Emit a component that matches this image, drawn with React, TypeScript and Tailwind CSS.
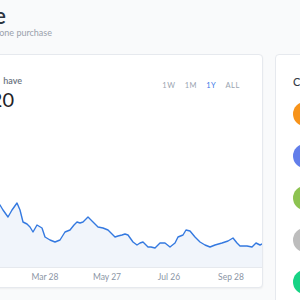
import React from 'react';

const line: [number, number][] = [
  [-236, 190], [-200, 178], [-170, 196], [-140, 184], [-110, 200], [-80, 188], [-50, 206], [-25, 196], [-10, 201],
  [0, 205], [3, 210], [8, 217], [12, 210], [17, 203], [20, 210], [23, 222], [27, 224], [30, 227], [33, 232],
  [37, 225], [42, 228], [45, 237], [50, 240], [55, 242], [60, 240], [65, 232], [70, 230], [74, 225], [77, 222],
  [80, 223], [83, 222], [88, 217], [93, 222], [98, 227], [103, 228], [108, 230], [112, 234], [115, 237],
  [118, 236], [122, 235], [125, 234], [128, 235], [133, 242], [137, 245], [140, 243], [143, 242], [148, 247],
  [151, 247], [155, 248], [160, 243], [165, 243], [170, 247], [175, 243], [178, 237], [183, 235], [186, 230],
  [190, 231], [195, 237], [200, 242], [205, 245], [210, 247], [215, 245], [222, 243], [228, 241], [233, 238],
  [237, 243], [240, 246], [244, 246], [247, 246], [252, 247], [256, 243], [260, 245], [264, 243],
];

const OX = 236;
const OY = 112;
const pts = line.map(([x, y]) => `${x + OX},${y - OY}`).join(' ');
const area = `M${pts.split(' ').join(' L')} L${264 + OX},155 L0,155 Z`;

const coins = [
  { bg: 'bg-[#f7931a]', g: '₿' },
  { bg: 'bg-[#627eea]', g: 'Ξ' },
  { bg: 'bg-[#8dc351]', g: '₿' },
  { bg: 'bg-[#bdbdbd]', g: 'Ł' },
  { bg: 'bg-[#17d385]', g: '$' },
];

const labels = ['Sep 28', 'Nov 27', 'Jan 27', 'Mar 28', 'May 27', 'Jul 26', 'Sep 28'];

export default function App() {
  return (
    <div className="w-[300px] h-[300px] overflow-hidden bg-[#f9fafb] font-['Lato',sans-serif]">
      <div className="-ml-[237px] w-[760px] pt-[5px]">
        <h1 className="w-[243px] text-right text-[22px] leading-[22px] font-semibold text-[#2c3540] whitespace-nowrap">Portfolio Balance</h1>
        <p className="w-[289px] text-right text-[9px] leading-[12px] text-[#9aa1ab] whitespace-nowrap">Buy and sell crypto in one purchase</p>

        <div className="mt-[15px] flex gap-[12px] items-start">
          <div className="w-[500px] shrink-0 bg-white border border-[#e6e9ee] rounded-[4px] shadow-[0_1px_2px_rgba(0,0,0,0.05)] flex flex-col">
            <div className="flex items-start pt-[20px]">
              <div className="w-[258px] text-right">
                <div className="text-[9px] leading-[12px] font-semibold text-[#6b7480] whitespace-nowrap">
                  <span className="mr-[4px]">What I</span> have
                </div>
                <div className="pr-[8px] text-[20px] leading-[24px] text-[#1f2328] whitespace-nowrap">$1,240.20</div>
              </div>
              <div className="ml-auto mt-[6px] pr-[22px] flex gap-[9px] text-[7.5px] leading-[10px] tracking-[0.6px] text-[#9aa4b0]">
                <span>1W</span>
                <span>1M</span>
                <span className="text-[#3b78e7]">1Y</span>
                <span>ALL</span>
              </div>
            </div>
            <svg width="498" height="155" viewBox="0 0 498 155" className="mt-[1px] block shrink-0">
              <path d={area} fill="#f1f5fb" />
              <polyline points={pts} fill="none" stroke="#3479e0" strokeWidth="1.4" strokeLinejoin="round" />
            </svg>
            <div className="border-t border-[#e6e9ee] flex justify-end">
              {labels.map((l, i) => (
                <span key={i} className="w-[62px] text-center text-[8.5px] leading-[19px] text-[#8b95a5]">{l}</span>
              ))}
            </div>
          </div>

          <div className="w-[200px] h-[260px] shrink-0 bg-white border border-[#e6e9ee] rounded-[4px] pl-[17px] pt-[20px]">
            <div className="text-[11px] leading-[14px] font-medium text-[#333a44]">Currencies</div>
            <div className="mt-[13px] flex flex-col gap-[18px]">
              {coins.map((c, i) => (
                <div key={i} className="flex items-center gap-[10px]">
                  <div className={`${c.bg} w-[24px] h-[24px] rounded-full flex items-center justify-center text-white text-[12px] font-bold`}>{c.g}</div>
                  <span className="text-[10px] text-[#333]">Coin</span>
                </div>
              ))}
            </div>
          </div>
        </div>
      </div>
    </div>
  );
}
